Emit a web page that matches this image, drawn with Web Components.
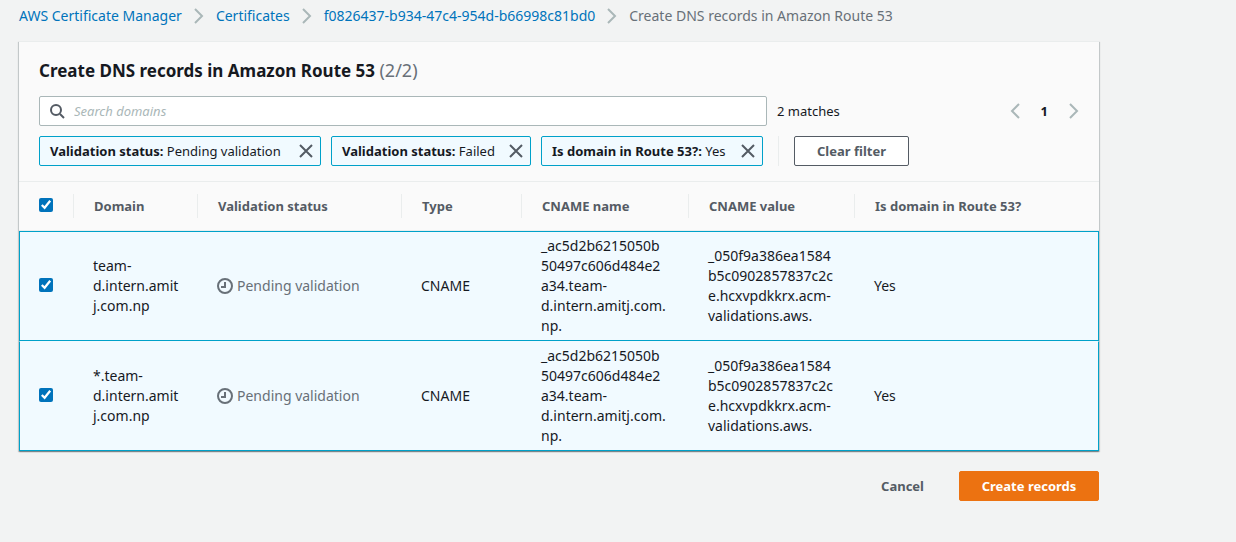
<!DOCTYPE html>
<html lang="en">
<head>
<meta charset="utf-8">
<meta name="viewport" content="width=device-width, initial-scale=1">
<title>Create DNS records in Amazon Route 53</title>
<style>
  :root {
    --text: #16191f;
    --muted: #687078;
    --strong: #545b64;
    --link: #0073bb;
    --teal: #00a1c9;
    --line: #eaeded;
    --icon: #aab7b8;
    --selected: #f1faff;
  }
  body {
    margin: 0;
    background: #f2f3f3;
    color: var(--text);
    font: 13px/20px "Noto Sans", "Open Sans", sans-serif;
  }
</style>
</head>
<body>
<acm-page>
  <acm-breadcrumbs slot="breadcrumbs"></acm-breadcrumbs>
  <acm-panel>
    <span slot="title">Create DNS records in Amazon Route 53</span>
    <span slot="count">(2/2)</span>
    <acm-search slot="tools"></acm-search>
    <acm-filters slot="tools">
      <acm-token class="wide" label="Validation status:">Pending validation</acm-token>
      <acm-token class="short" label="Validation status:">Failed</acm-token>
      <acm-token class="medium" label="Is domain in Route 53?:">Yes</acm-token>
    </acm-filters>
    <acm-records></acm-records>
  </acm-panel>
  <acm-button slot="actions" variant="link">Cancel</acm-button>
  <acm-button slot="actions" variant="primary">Create records</acm-button>
</acm-page>

<script>
const define = (name, html, setup) => customElements.define(name, class extends HTMLElement {
  constructor() {
    super();
    const template = document.createElement('template');
    template.innerHTML = html;
    this.attachShadow({ mode: 'open' }).append(template.content.cloneNode(true));
  }
  connectedCallback() {
    if (setup) setup(this.shadowRoot, this);
  }
});

define('acm-page', `
  <style>
    :host { display: block; padding: 6px 137px 20px 19px; }
    main { margin-top: 15px; }
    footer { display: flex; justify-content: flex-end; gap: 14px; margin-top: 20px; }
  </style>
  <slot name="breadcrumbs"></slot>
  <main><slot></slot></main>
  <footer><slot name="actions"></slot></footer>
`);

define('acm-icon', `
  <style>
    :host { display: inline-flex; flex: none; width: 16px; height: 16px; color: var(--icon); }
    svg { width: 100%; height: 100%; fill: none; stroke: currentColor; stroke-width: 2; }
  </style>
  <svg viewBox="0 0 16 16" aria-hidden="true"></svg>
`, (root, host) => {
  const shapes = {
    next: '<path d="M4 1l7 7-7 7"/>',
    previous: '<path d="M12 1L5 8l7 7"/>',
    close: '<path d="M2 2l12 12M14 2L2 14"/>',
    search: '<circle cx="7" cy="7" r="5"/><path d="M11 11l4 4"/>',
    pending: '<circle cx="8" cy="8" r="7"/><path d="M8 4v5H4"/>'
  };
  root.querySelector('svg').innerHTML = shapes[host.getAttribute('name')];
});

define('acm-breadcrumbs', `
  <style>
    :host { display: block; font-size: 14px; }
    ol { display: flex; flex-wrap: wrap; margin: 0; padding: 0; list-style: none; }
    li { display: flex; align-items: center; }
    a { color: var(--link); text-decoration: none; }
    acm-icon { margin: 0 9px; }
    [aria-current] { color: var(--muted); }
  </style>
  <nav aria-label="Breadcrumbs"><ol>
    <li><a href="#home">AWS Certificate Manager</a><acm-icon name="next"></acm-icon></li>
    <li><a href="#certificates">Certificates</a><acm-icon name="next"></acm-icon></li>
    <li><a href="#certificate">f0826437-b934-47c4-954d-b66998c81bd0</a><acm-icon name="next"></acm-icon></li>
    <li><span aria-current="page">Create DNS records in Amazon Route 53</span></li>
  </ol></nav>
`);

define('acm-panel', `
  <style>
    :host {
      display: block; background: #fafafa; border-top: 1px solid var(--line);
      box-shadow: 0 1px 1px 0 rgba(0,28,36,.3), 1px 1px 1px 0 rgba(0,28,36,.15), -1px 1px 1px 0 rgba(0,28,36,.15);
    }
    header { display: flex; flex-direction: column; gap: 10px; padding: 18px 20px 15px; }
    h1 { margin: 0 0 4px; font-size: 17px; line-height: 22px; font-weight: 700; }
    slot[name=count] { font-size: 18px; line-height: 16px; font-weight: 400; color: var(--muted); }
  </style>
  <header>
    <h1><slot name="title"></slot> <slot name="count"></slot></h1>
    <slot name="tools"></slot>
  </header>
  <slot></slot>
`);

define('acm-search', `
  <style>
    :host { display: flex; align-items: center; gap: 10px; }
    label {
      box-sizing: border-box; display: flex; align-items: center; gap: 9px;
      width: 70%; height: 30px; padding: 0 9px;
      background: #fff; border: 1px solid var(--icon); border-radius: 2px;
    }
    label acm-icon { color: var(--strong); }
    input { flex: 1; min-width: 0; padding: 0; border: 0; outline: 0; background: none; font: inherit; color: inherit; }
    input::placeholder { color: var(--icon); font-style: italic; opacity: 1; }
    nav { display: flex; align-items: center; gap: 18px; margin: 0 -3px 0 auto; font-weight: 700; }
    button { display: flex; padding: 0; border: 0; background: none; }
  </style>
  <label><acm-icon name="search"></acm-icon><input type="text" placeholder="Search domains" aria-label="Search domains"></label>
  <span>2 matches</span>
  <nav aria-label="Pages">
    <button aria-label="Previous page"><acm-icon name="previous"></acm-icon></button>
    <span>1</span>
    <button aria-label="Next page"><acm-icon name="next"></acm-icon></button>
  </nav>
`);

define('acm-filters', `
  <style>
    :host { display: flex; gap: 15px; }
    .tokens { display: flex; gap: 10px; }
    ::slotted(.wide) { min-width: 282px; }
    ::slotted(.medium) { min-width: 222px; }
    ::slotted(.short) { min-width: 200px; }
    acm-button { padding-left: 15px; border-left: 1px solid var(--line); }
  </style>
  <div class="tokens"><slot></slot></div>
  <acm-button>Clear filter</acm-button>
`);

define('acm-token', `
  <style>
    :host {
      box-sizing: border-box; display: flex; align-items: center; justify-content: space-between;
      height: 30px; padding: 0 6px 0 10px; white-space: nowrap;
      background: var(--selected); border: 1px solid var(--teal); border-radius: 2px;
    }
    button { display: flex; padding: 0; border: 0; background: none; }
    acm-icon { color: var(--strong); }
  </style>
  <span><b></b> <slot></slot></span>
  <button aria-label="Remove filter"><acm-icon name="close"></acm-icon></button>
`, (root, host) => {
  root.querySelector('b').textContent = host.getAttribute('label');
});

define('acm-button', `
  <style>
    :host { display: block; }
    button {
      box-sizing: border-box; height: 30px; min-width: 115px; padding: 0 20px;
      border: 1px solid var(--strong); border-radius: 2px; background: #fff;
      color: var(--strong); font: inherit; font-weight: 700;
    }
    :host([variant=link]) button { min-width: 0; border-color: transparent; background: none; }
    :host([variant=primary]) button { min-width: 140px; border-color: #ec7211; background: #ec7211; color: #fff; }
  </style>
  <button type="button"><slot></slot></button>
`);

define('acm-status', `
  <style>
    :host { display: flex; align-items: center; gap: 4px; color: var(--muted); white-space: nowrap; }
    acm-icon { color: inherit; }
  </style>
  <acm-icon name="pending"></acm-icon><slot></slot>
`);

define('acm-records', `
  <style>
    :host { display: block; }
    table { width: 100%; table-layout: fixed; border-collapse: separate; border-spacing: 0; }
    .c-check { width: 55px; }
    .c-domain { width: 124px; }
    .c-status { width: 204px; }
    .c-type { width: 120px; }
    .c-name { width: 167px; }
    .c-value { width: 166px; }
    th {
      padding: 12px 0; border-top: 1px solid var(--line); border-bottom: 1px solid var(--line);
      color: var(--strong); text-align: left; font-weight: 700;
    }
    th > div { display: flex; align-items: center; height: 24px; padding-left: 20px; border-right: 1px solid var(--line); }
    th:last-child > div { border-right: 0; }
    td {
      padding: 4px 16px 4px 19px; background: var(--selected); font-size: 14px;
      border-top: 1px solid transparent; border-bottom: 1px solid var(--teal);
      overflow-wrap: break-word;
    }
    tbody tr:first-child td { border-top-color: var(--teal); }
    td:first-child { border-left: 1px solid var(--teal); }
    td:last-child { border-right: 1px solid var(--teal); }
    input { display: block; width: 14px; height: 14px; margin: 0 0 2px; accent-color: var(--link); }
  </style>
  <table>
    <colgroup>
      <col class="c-check"><col class="c-domain"><col class="c-status"><col class="c-type">
      <col class="c-name"><col class="c-value"><col>
    </colgroup>
    <thead><tr>
      <th><div><input type="checkbox" checked aria-label="Select all domains"></div></th>
      <th scope="col"><div>Domain</div></th>
      <th scope="col"><div>Validation status</div></th>
      <th scope="col"><div>Type</div></th>
      <th scope="col"><div>CNAME name</div></th>
      <th scope="col"><div>CNAME value</div></th>
      <th scope="col"><div>Is domain in Route 53?</div></th>
    </tr></thead>
    <tbody></tbody>
  </table>
`, root => {
  const domains = ['team-d.intern.amit<wbr>j.com.np', '*.team-d.intern.amit<wbr>j.com.np'];
  root.querySelector('tbody').innerHTML = domains.map((domain, i) => `
    <tr>
      <td><input type="checkbox" checked aria-label="Select domain ${i + 1}"></td>
      <td>${domain}</td>
      <td><acm-status>Pending validation</acm-status></td>
      <td>CNAME</td>
      <td>_ac5d2b6215050b<wbr>50497c606d484e2<wbr>a34.team-d.intern.amitj.com.<wbr>np.</td>
      <td>_050f9a386ea1584<wbr>b5c0902857837c2c<wbr>e.hcxvpdkkrx.acm-validations.aws.</td>
      <td>Yes</td>
    </tr>`).join('');
});
</script>
</body>
</html>
